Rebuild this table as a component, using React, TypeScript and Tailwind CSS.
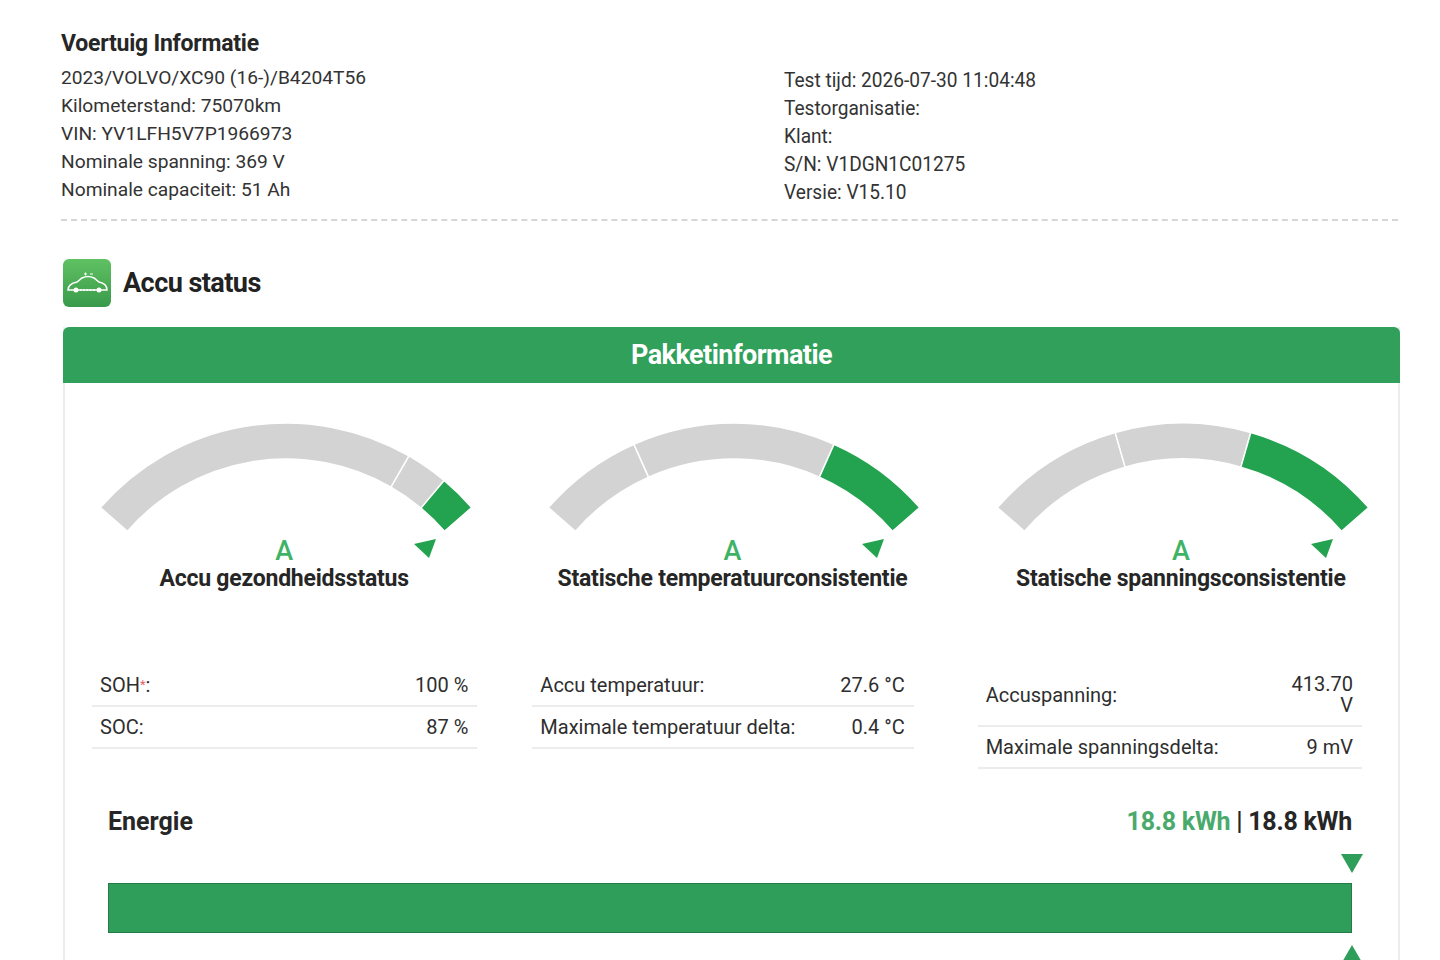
import React from "react"

const FONT = { fontFamily: "Roboto, 'Noto Sans', Arial, sans-serif" }

type Seg = { from: number; to: number; green?: boolean }

const CX = 224
const CY = 250
const R_OUT = 246
const R_IN = 210

function pt(r: number, deg: number) {
  const a = (deg * Math.PI) / 180
  return `${(CX + r * Math.sin(a)).toFixed(2)} ${(CY - r * Math.cos(a)).toFixed(2)}`
}

function sector(from: number, to: number) {
  return `M ${pt(R_OUT, from)} A ${R_OUT} ${R_OUT} 0 0 1 ${pt(R_OUT, to)} L ${pt(R_IN, to)} A ${R_IN} ${R_IN} 0 0 0 ${pt(R_IN, from)} Z`
}

function Gauge({ segs, shift }: { segs: Seg[]; shift: string }) {
  return (
    <svg width="448" height="120" viewBox="0 0 448 120" className={"block overflow-visible mx-auto " + shift}>
      {segs.map((s, i) => (
        <path
          key={i}
          d={sector(s.from, s.to)}
          fill={s.green ? "#23a24f" : "#d3d3d3"}
          stroke="#ffffff"
          strokeWidth="1.5"
        />
      ))}
      {/* pointer */}
      <polygon points="352,125 374,120 367,139" fill="#23a24f" />
    </svg>
  )
}

function Row({ label, value, star, valueClass }: { label: string; value: string; star?: boolean; valueClass?: string }) {
  return (
    <div className="flex items-center justify-between border-b-2 border-[#ececec] pl-[8px] pr-[9px] py-[9px] text-[20px] leading-[22px] text-[#2e2e2e]">
      <span>
        {label.replace(":", "")}
        {star && <span className="text-[#e8606a] text-[13px] align-top">*</span>}
        :
      </span>
      <span className={"text-right " + (valueClass ?? "")}>{value}</span>
    </div>
  )
}

function CarIcon() {
  return (
    <div className="w-[48px] h-[48px] rounded-[6px] bg-linear-to-b from-[#5fc162] to-[#399a4b] flex items-center justify-center shrink-0">
      <svg width="48" height="48" viewBox="0 0 48 48" fill="none">
        <path
          d="M5 31 C5 26 9 24 14 23 L19 19 C23 17 27 17 31 19 L36 23 C41 24 44 26 44 31 Z"
          stroke="#ffffff"
          strokeWidth="1.5"
        />
        <path d="M21 15 h3 M22.5 13.5 v3 M27 15 h3" stroke="#ffffff" strokeWidth="1" />
        <circle cx="13" cy="31" r="2.5" fill="#ffffff" />
        <circle cx="36" cy="31" r="2.5" fill="#ffffff" />
        <path d="M17 31 h15" stroke="#ffffff" strokeWidth="1.5" strokeDasharray="2 1.2" />
      </svg>
    </div>
  )
}

export default function App() {
  const gauges = [
    {
      segs: [{ from: -49, to: 30 }, { from: 30, to: 40 }, { from: 40, to: 49, green: true }],
      label: "Accu gezondheidsstatus",
      shift: "-translate-x-[3px]",
      pad: "pl-[27px] pr-[32px]",
      rows: [
        { label: "SOH:", value: "100 %", star: true },
        { label: "SOC:", value: "87 %" },
      ],
    },
    {
      segs: [{ from: -49, to: -24 }, { from: -24, to: 24 }, { from: 24, to: 49, green: true }],
      label: "Statische temperatuurconsistentie",
      shift: "translate-x-[1px]",
      pad: "pl-[23px] pr-[40px]",
      rows: [
        { label: "Accu temperatuur:", value: "27.6 °C" },
        { label: "Maximale temperatuur delta:", value: "0.4 °C" },
      ],
    },
    {
      segs: [{ from: -49, to: -16 }, { from: -16, to: 16 }, { from: 16, to: 49, green: true }],
      label: "Statische spanningsconsistentie",
      shift: "translate-x-[5px]",
      pad: "pl-[24px] pr-[36px]",
      rows: [
        { label: "Accuspanning:", value: "413.70 V", valueClass: "w-[64px] leading-[21px]" },
        { label: "Maximale spanningsdelta:", value: "9 mV" },
      ],
    },
  ]

  return (
    <div className="min-h-screen bg-white text-[#2d2d2d]" style={FONT}>
      <div className="ml-[61px] w-[1339px] pt-[30px]">
        {/* Vehicle information */}
        <div className="grid grid-cols-[723px_1fr]">
          <div>
            <h2 className="text-[23px] leading-[28px] font-bold text-[#262626] tracking-[-0.01em]">Voertuig Informatie</h2>
            <div className="mt-[6px] text-[19.2px] leading-[28px] text-[#333]">
              <div>2023/VOLVO/XC90 (16-)/B4204T56</div>
              <div>Kilometerstand: 75070km</div>
              <div>VIN: YV1LFH5V7P1966973</div>
              <div>Nominale spanning: 369 V</div>
              <div>Nominale capaciteit: 51 Ah</div>
            </div>
          </div>
          <div className="pt-[36px] text-[21px] leading-[28px] text-[#333] origin-left scale-x-[0.91]">
            <div>Test tijd: 2026-07-30 11:04:48</div>
            <div>Testorganisatie:</div>
            <div>Klant:</div>
            <div>S/N: V1DGN1C01275</div>
            <div>Versie: V15.10</div>
          </div>
        </div>

        <div className="mt-[13px] w-[1337px] border-t-2 border-dashed border-[#d6d6d6]" />

        {/* Accu status */}
        <div className="mt-[38px] ml-[2px] flex items-center gap-[12px]">
          <CarIcon />
          <h2 className="text-[27px] font-bold text-[#222] tracking-[-0.02em]">Accu status</h2>
        </div>

        {/* Card */}
        <div className="mt-[20px] ml-[2px] w-[1337px] border-x-2 border-[#ececec] bg-white">
          <div className="-mx-[2px] h-[56px] rounded-t-[6px] bg-[#30a05b] flex items-center justify-center">
            <span className="text-white text-[27px] font-bold tracking-[-0.02em]">Pakketinformatie</span>
          </div>

          <div className="grid grid-cols-3 pt-[36px]">
            {gauges.map((g, i) => (
              <div key={i} className="flex flex-col">
                <Gauge segs={g.segs} shift={g.shift} />
                <div className={"text-center text-[27px] leading-[24px] font-medium text-[#3eb366] " + g.shift}>A</div>
                <div className={"mt-[4px] text-center text-[23px] leading-[24px] font-bold text-[#262626] tracking-[-0.01em] " + g.shift}>
                  {g.label}
                </div>
                <div className={"mt-[74px] " + g.pad}>
                  {g.rows.map((r, j) => (
                    <Row key={j} label={r.label} value={r.value} star={r.star} valueClass={r.valueClass} />
                  ))}
                </div>
              </div>
            ))}
          </div>

          {/* Energy */}
          <div className="pl-[43px] pr-[46px] pt-[37px] pb-[20px]">
            <div className="flex items-center justify-between">
              <span className="text-[25px] leading-[32px] font-bold text-[#262626]">Energie</span>
              <span className="text-[25px] leading-[32px] font-bold text-[#262626] tracking-[-0.01em]">
                <span className="text-[#4aaa6c]">18.8 kWh</span> | 18.8 kWh
              </span>
            </div>
            <div className="mt-[16px] flex justify-end">
              <svg width="22" height="19" viewBox="0 0 22 19" className="-mr-[11px]">
                <polygon points="0,0 22,0 11,19" fill="#2f9e5a" />
              </svg>
            </div>
            <div className="mt-[10px] h-[50px] bg-[#2f9e5a] border border-[#267a47]" />
            <div className="mt-[12px] flex justify-end">
              <svg width="22" height="19" viewBox="0 0 22 19" className="-mr-[11px]">
                <polygon points="11,0 22,19 0,19" fill="#2f9e5a" />
              </svg>
            </div>
          </div>
        </div>
      </div>
    </div>
  )
}
